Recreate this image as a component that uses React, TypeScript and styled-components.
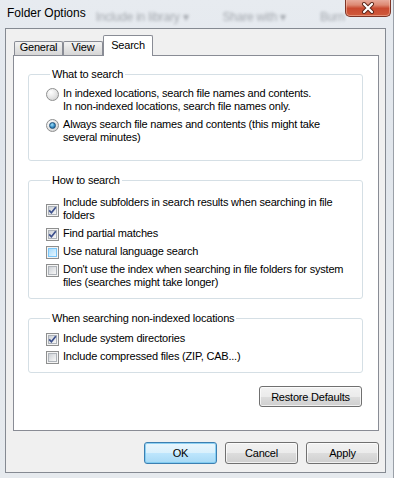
import React from "react";
import styled, { createGlobalStyle } from "styled-components";

const GlobalStyle = createGlobalStyle`
  html, body {
    margin: 0;
    padding: 0;
  }
  body {
    background: #e3e8ee;
    font-family: "Liberation Sans", Arial, sans-serif;
    font-size: 11px;
    letter-spacing: -0.2px;
    color: #000;
  }
`;

const Frame = styled.div`
  box-sizing: border-box;
  width: 394px;
  height: 478px;
  display: flex;
  flex-direction: column;
  overflow: hidden;
  background: linear-gradient(to bottom, #e7ebf0, #e1e6ec 30%, #e6eaee);
  border-right: 1px solid #9aa0a8;
`;

const TitleBar = styled.div`
  flex: none;
  height: 28px;
  display: flex;
  align-items: flex-start;
`;

const Title = styled.div`
  flex: none;
  padding: 6px 0 0 7px;
  font-size: 12px;
  letter-spacing: 0;
  line-height: 14px;
  white-space: nowrap;
`;

const GlassText = styled.div`
  flex: none;
  display: flex;
  gap: 34px;
  margin: 10px 0 0 10px;
  font-size: 12px;
  line-height: 14px;
  color: #50555d;
  opacity: 0.45;
  filter: blur(1.4px);
  white-space: nowrap;
`;

const CloseButton = styled.div`
  flex: none;
  box-sizing: border-box;
  margin-left: auto;
  margin-right: 7px;
  width: 46px;
  height: 18px;
  margin-top: -1px;
  display: flex;
  align-items: center;
  justify-content: center;
  border: 1px solid #7d3426;
  border-top: none;
  border-radius: 0 0 5px 5px;
  background: linear-gradient(to bottom, #eab0a2 0%, #dd8a74 35%, #c94a30 55%, #cf5a3c 100%);
  box-shadow: inset 0 0 0 1px rgba(255, 210, 190, 0.45);
`;

const Client = styled.div`
  flex: 1;
  display: flex;
  flex-direction: column;
  margin: 0 7px 5px 5px;
  padding: 6px 6px 8px 7px;
  border: 1px solid #858a92;
  background: #f0f0f0;
`;

const TabStrip = styled.div`
  position: relative;
  z-index: 1;
  flex: none;
  height: 20px;
  display: flex;
  align-items: flex-end;
  padding-left: 1px;
`;

const Tab = styled.div<{ $active?: boolean; $w: number }>`
  box-sizing: border-box;
  width: ${(p) => p.$w}px;
  height: ${(p) => (p.$active ? 21 : 14)}px;
  margin-bottom: ${(p) => (p.$active ? -1 : 0)}px;
  display: flex;
  justify-content: center;
  align-items: ${(p) => (p.$active ? "flex-start" : "center")};
  padding: ${(p) => (p.$active ? "3px 0 0" : "0 0 2px")};
  line-height: 13px;
  border: 1px solid #898c95;
  border-bottom: none;
  border-radius: 2px 2px 0 0;
  background: ${(p) =>
    p.$active ? "#fff" : "linear-gradient(to bottom, #f3f3f3, #e4e4e4 50%, #d6d6d6)"};
`;

const Panel = styled.div`
  flex: none;
  box-sizing: border-box;
  height: 376px;
  display: flex;
  flex-direction: column;
  gap: 13px;
  padding: 12px 15px 0 14px;
  border: 1px solid #898c95;
  background: #fff;
`;

const Group = styled.fieldset<{ $top: number; $bottom: number }>`
  margin: 0;
  min-width: 0;
  display: flex;
  flex-direction: column;
  gap: 5px;
  padding: ${(p) => p.$top}px 8px ${(p) => p.$bottom}px 17px;
  border: 1px solid #d5dfe5;
  border-radius: 3px;
`;

const Legend = styled.legend`
  margin-left: 4px;
  padding: 0 2px;
  line-height: 13px;
`;

const Option = styled.div<{ $center?: boolean }>`
  display: flex;
  align-items: ${(p) => (p.$center ? "center" : "flex-start")};
  gap: 4px;
  line-height: 13px;
  white-space: nowrap;
`;

const Box = styled.span<{ $hot?: boolean }>`
  flex: none;
  position: relative;
  box-sizing: border-box;
  width: 13px;
  height: 13px;
  margin: 1px 0 -1px;
  border: 1px solid #8e8f8f;
  background: #f4f4f4;

  &::before {
    content: "";
    position: absolute;
    inset: 1px;
    border: 1px solid ${(p) => (p.$hot ? "#79c6f9" : "#aeb3b9")};
    background: ${(p) =>
      p.$hot
        ? "linear-gradient(135deg, #a9dcfc, #e6f6fe)"
        : "linear-gradient(135deg, #cdd1d6, #f8f8f8)"};
  }

  svg {
    position: absolute;
    left: 0;
    top: 0;
  }
`;

const Radio = styled.span<{ $on?: boolean }>`
  flex: none;
  position: relative;
  box-sizing: border-box;
  width: 13px;
  height: 13px;
  margin: 1px 0 -1px;
  border-radius: 50%;
  border: 1px solid #8e8f8f;
  background: radial-gradient(circle at 35% 30%, #ffffff, #e6e6e6 50%, #c9c9c9);

  &::after {
    content: "";
    display: ${(p) => (p.$on ? "block" : "none")};
    position: absolute;
    left: 2px;
    top: 2px;
    width: 5px;
    height: 5px;
    border-radius: 50%;
    border: 1px solid #1d4f79;
    background: radial-gradient(circle at 40% 35%, #9fe0fb, #2f86bf 60%, #15507d);
  }
`;

const ButtonRow = styled.div<{ $top: number; $right: number }>`
  flex: none;
  display: flex;
  justify-content: flex-end;
  gap: 8px;
  margin-top: ${(p) => p.$top}px;
  padding-right: ${(p) => p.$right}px;
`;

const Button = styled.div<{ $w: number; $h: number; $default?: boolean }>`
  box-sizing: border-box;
  width: ${(p) => p.$w}px;
  height: ${(p) => p.$h}px;
  display: flex;
  align-items: center;
  justify-content: center;
  border: 1px solid ${(p) => (p.$default ? "#3c7fb1" : "#707070")};
  border-radius: 3px;
  background: ${(p) =>
    p.$default
      ? "linear-gradient(to bottom, #eaf6fd 0%, #d9f0fc 50%, #bee6fd 50%, #a7d9f5 100%)"
      : "linear-gradient(to bottom, #f2f2f2 0%, #ebebeb 50%, #dddddd 50%, #cfcfcf 100%)"};
  box-shadow: inset 0 0 0 1px ${(p) => (p.$default ? "rgba(120, 200, 240, 0.8)" : "rgba(255, 255, 255, 0.7)")};
`;

const Check = () => (
  <svg width="11" height="11" viewBox="0 0 11 11">
    <path d="M2.2 5.4 L4.4 7.8 L8.8 2.2" fill="none" stroke="#3b4f8c" strokeWidth="1.7" />
  </svg>
);

const CheckBox = ({ on, hot }: { on?: boolean; hot?: boolean }) => (
  <Box $hot={hot}>{on && <Check />}</Box>
);

const CloseGlyph = () => (
  <svg width="14" height="12" viewBox="0 0 14 12">
    <path d="M3 2 L11 10 M11 2 L3 10" stroke="#5a2418" strokeWidth="4" strokeLinecap="round" />
    <path d="M3 2 L11 10 M11 2 L3 10" stroke="#ffffff" strokeWidth="2.2" strokeLinecap="round" />
  </svg>
);

export default function App() {
  return (
    <>
      <GlobalStyle />
      <Frame>
        <TitleBar>
          <Title>Folder Options</Title>
          <GlassText>
            <span>Include in library ▾</span>
            <span>Share with ▾</span>
            <span>Burn</span>
          </GlassText>
          <CloseButton>
            <CloseGlyph />
          </CloseButton>
        </TitleBar>
        <Client>
          <TabStrip>
            <Tab $w={49}>General</Tab>
            <Tab $w={40}>View</Tab>
            <Tab $w={50} $active>
              Search
            </Tab>
          </TabStrip>
          <Panel>
            <Group $top={6} $bottom={16}>
              <Legend>What to search</Legend>
              <Option>
                <Radio />
                <span>
                  In indexed locations, search file names and contents.
                  <br />
                  In non-indexed locations, search file names only.
                </span>
              </Option>
              <Option>
                <Radio $on />
                <span>
                  Always search file names and contents (this might take
                  <br />
                  several minutes)
                </span>
              </Option>
            </Group>
            <Group $top={9} $bottom={9}>
              <Legend>How to search</Legend>
              <Option $center>
                <CheckBox on />
                <span>
                  Include subfolders in search results when searching in file
                  <br />
                  folders
                </span>
              </Option>
              <Option>
                <CheckBox on />
                <span>Find partial matches</span>
              </Option>
              <Option>
                <CheckBox hot />
                <span>Use natural language search</span>
              </Option>
              <Option>
                <CheckBox />
                <span>
                  Don't use the index when searching in file folders for system
                  <br />
                  files (searches might take longer)
                </span>
              </Option>
            </Group>
            <Group $top={7} $bottom={9}>
              <Legend>When searching non-indexed locations</Legend>
              <Option>
                <CheckBox on />
                <span>Include system directories</span>
              </Option>
              <Option>
                <CheckBox />
                <span>Include compressed files (ZIP, CAB...)</span>
              </Option>
            </Group>
            <ButtonRow $top={0} $right={1}>
              <Button $w={103} $h={21}>
                Restore Defaults
              </Button>
            </ButtonRow>
          </Panel>
          <ButtonRow $top={11} $right={0}>
            <Button $w={73} $h={22} $default>
              OK
            </Button>
            <Button $w={73} $h={22}>
              Cancel
            </Button>
            <Button $w={73} $h={22}>
              Apply
            </Button>
          </ButtonRow>
        </Client>
      </Frame>
    </>
  );
}
